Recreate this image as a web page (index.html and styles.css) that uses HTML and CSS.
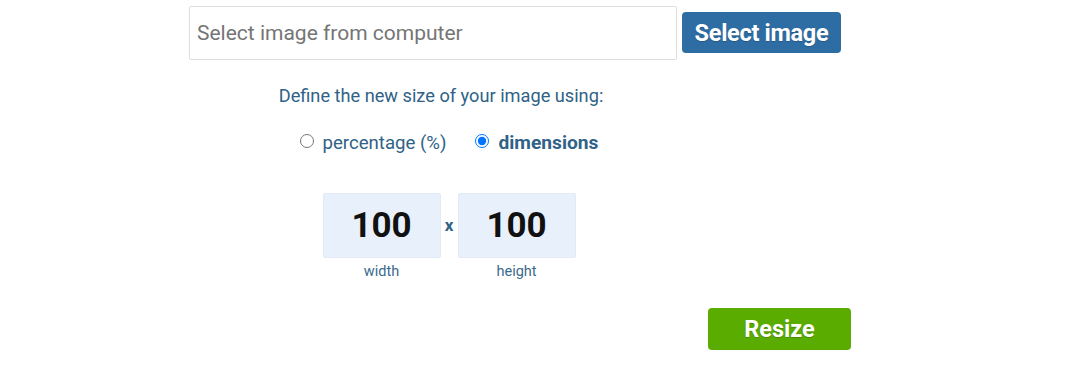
FILE: index.html
```html
<!DOCTYPE html>
<html lang="en">
<head>
    <meta charset="UTF-8">
    <meta name="viewport" content="width=device-width, initial-scale=1.0">
    <title>Resize image</title>
    <link rel="stylesheet" href="styles.css">
</head>
<body>
    <div class="container">
        <div class="file-row">
            <input type="text" class="file-input" placeholder="Select image from computer" readonly>
            <button class="btn select-btn">Select image</button>
        </div>

        <div class="options">
            <p class="define">Define the new size of your image using:</p>
            <div class="modes">
                <label class="mode"><input type="radio" name="mode"> percentage (%)</label>
                <label class="mode active"><input type="radio" name="mode" checked> dimensions</label>
            </div>
            <div class="sizes">
                <div class="size">
                    <input type="text" class="size-box" value="100">
                    <span class="size-label">width</span>
                </div>
                <span class="times">x</span>
                <div class="size">
                    <input type="text" class="size-box" value="100">
                    <span class="size-label">height</span>
                </div>
            </div>
        </div>

        <div class="actions">
            <button class="btn resize-btn">Resize</button>
        </div>
    </div>
</body>
</html>
```

FILE: styles.css
```css
body {
    font-family: Roboto, 'Liberation Sans', sans-serif;
    margin: 0;
    background: #fff;
}
.container {
    width: 662px;
    margin-left: 189px;
    padding-top: 6px;
}
.file-row {
    display: flex;
    align-items: center;
    gap: 5px;
}
.file-input {
    box-sizing: border-box;
    width: 488px;
    height: 54px;
    border: 1px solid #dedede;
    border-radius: 2px;
    padding: 0 7px;
    font-family: inherit;
    font-size: 21px;
    color: #333;
    outline: none;
}
.file-input::placeholder {
    color: #757575;
}
.btn {
    border: none;
    color: #fff;
    font-family: inherit;
    font-weight: bold;
    font-size: 23.5px;
    border-radius: 4px;
    cursor: pointer;
    text-shadow: 0 1px 1px rgba(0,0,0,0.2);
    padding: 0;
}
.select-btn {
    background: #2e6da4;
    width: 159px;
    height: 41px;
    margin-top: -1px;
    letter-spacing: -0.3px;
}
.options {
    width: 520px;
    display: flex;
    flex-direction: column;
    align-items: center;
}
.define {
    margin: 25px 16px 0 0;
    font-size: 18.2px;
    color: #2f6286;
}
.modes {
    display: flex;
    gap: 29px;
    margin-top: 25px;
    font-size: 18.6px;
    color: #2f6286;
}
.mode {
    display: flex;
    align-items: center;
    gap: 8px;
}
.mode input {
    width: 14px;
    height: 14px;
    margin: 0 1px 0 0;
    position: relative;
    top: -2px;
}
.mode.active {
    font-weight: bold;
    font-size: 19.2px;
}
.sizes {
    display: flex;
    align-items: flex-start;
    gap: 4px;
    margin-top: 39px;
}
.size {
    display: flex;
    flex-direction: column;
    align-items: center;
}
.size-box {
    box-sizing: border-box;
    width: 118px;
    height: 65px;
    border: 1px solid #e3eaf5;
    border-radius: 2px;
    background: #e8f0fb;
    text-align: center;
    font-family: inherit;
    font-weight: bold;
    font-size: 35px;
    color: #111;
    outline: none;
}
.size-label {
    margin-top: 5px;
    font-size: 14.5px;
    color: #3a6a8c;
}
.times {
    margin-top: 22px;
    font-weight: bold;
    font-size: 17px;
    color: #2f6286;
    width: 9px;
    text-align: center;
}
.actions {
    display: flex;
    justify-content: flex-end;
    margin-top: 28px;
}
.resize-btn {
    background: #5aac00;
    width: 143px;
    height: 42px;
}
```
